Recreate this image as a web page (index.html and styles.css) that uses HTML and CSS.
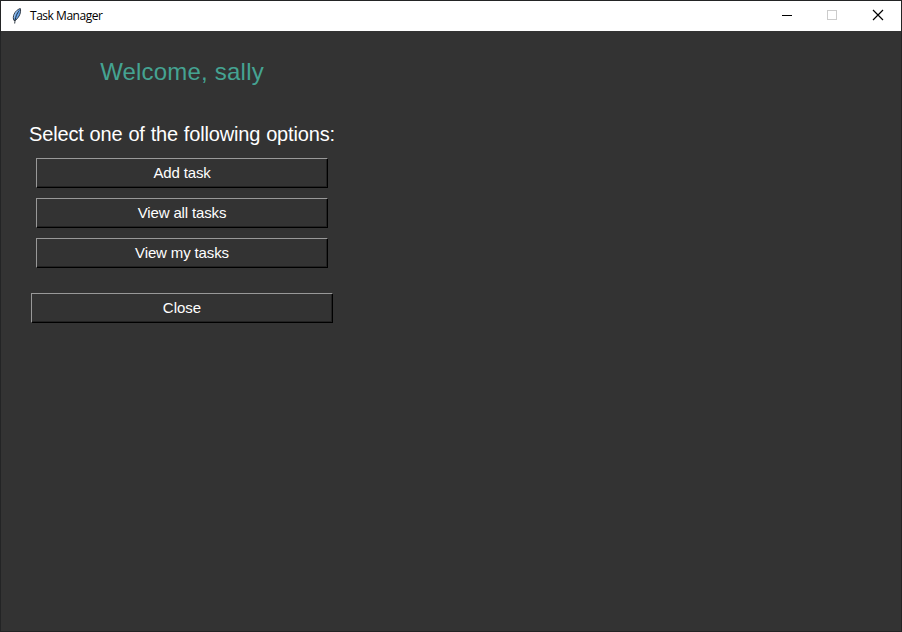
FILE: index.html
```html
<!DOCTYPE html>
<html lang="en">
<head>
<meta charset="utf-8">
<title>Task Manager</title>
<link rel="stylesheet" href="styles.css">
</head>
<body>
<div class="window">
  <header class="titlebar">
    <svg class="feather" width="16" height="16" viewBox="0 0 16 16">
      <path d="M5 12.500C3 9 5.500 2.500 11.300.5C12.300 4 10.500 9 6.800 12Z" fill="#68a4e8" stroke="#20262e" stroke-width=".9"/>
      <path d="M10.200 2.500C8 5.500 6.200 9 5.700 15.500" fill="none" stroke="#18222e" stroke-width=".9"/>
      <path d="M5.300 9.500C5.500 6.500 7 4.200 8.800 2.600" fill="none" stroke="#b9d4ef" stroke-width=".7"/>
    </svg>
    <span class="caption">Task Manager</span>
    <div class="controls">
      <svg width="46" height="30" viewBox="0 0 46 30" shape-rendering="crispEdges"><path d="M18 14h10v1H18z" fill="#000"/></svg>
      <svg width="46" height="30" viewBox="0 0 46 30" shape-rendering="crispEdges"><path d="M17.500 9.500h9v9h-9z" fill="none" stroke="#ccc"/></svg>
      <svg width="46" height="30" viewBox="0 0 46 30"><path d="M17 9l10 10M27 9L17 19" fill="none" stroke="#000" stroke-width="1.200"/></svg>
    </div>
  </header>
  <main class="panel">
    <h1 class="welcome">Welcome, sally</h1>
    <p class="prompt">Select one of the following options:</p>
    <div class="options">
      <button class="btn">Add task</button>
      <button class="btn">View all tasks</button>
      <button class="btn">View my tasks</button>
    </div>
    <button class="btn close">Close</button>
  </main>
</div>
</body>
</html>
```
FILE: styles.css
```css
* { box-sizing: border-box; }
body { margin: 0; }
.window {
  width: 902px;
  height: 632px;
  border: 1px solid #232425;
  background: #333;
  font-family: "Liberation Sans", Arial, sans-serif;
  overflow: hidden;
}
.titlebar {
  display: flex;
  align-items: center;
  height: 30px;
  padding-left: 8px;
  background: #fff;
}
.feather { margin-right: 5px; }
.caption {
  font: 12px/16px "Open Sans", "Noto Sans", sans-serif;
  letter-spacing: -0.47px;
  color: #000;
}
.controls { display: flex; margin: 0 -1px 0 auto; }
.panel {
  display: flex;
  flex-direction: column;
  align-items: center;
  width: 302px;
  margin-left: 30px;
  padding-top: 25px;
}
.welcome {
  margin: 0;
  font-size: 24px;
  font-weight: 400;
  line-height: 32px;
  letter-spacing: 0.2px;
  color: #45a392;
  white-space: nowrap;
}
.prompt {
  margin: 32px 0 0;
  font-size: 20px;
  line-height: 28px;
  letter-spacing: -0.16px;
  word-spacing: 0.5px;
  color: #fff;
  white-space: nowrap;
}
.options {
  display: flex;
  flex-direction: column;
  gap: 10px;
  width: 292px;
  margin-top: 10px;
}
.btn {
  width: 100%;
  height: 30px;
  padding: 0;
  border: 1px solid;
  border-color: #999 #000 #000 #999;
  border-radius: 0;
  box-shadow: inset -1px -1px #222;
  background: #333;
  color: #fff;
  font: 15px/28px "Liberation Sans", Arial, sans-serif;
  letter-spacing: -0.14px;
}
.close {
  margin-top: 25px;
  letter-spacing: 0;
}
```
